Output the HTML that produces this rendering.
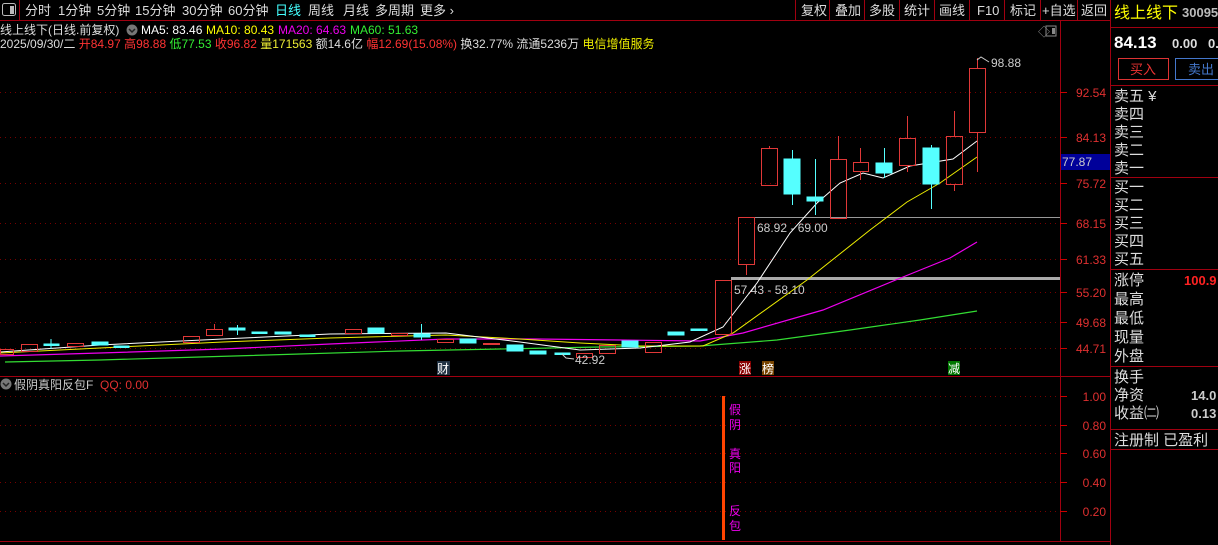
<!DOCTYPE html>
<html><head><meta charset="utf-8"><style>
html,body{margin:0;padding:0;background:#000;width:1218px;height:545px;overflow:hidden}
svg{display:block}
text{font-family:"Liberation Sans","Noto Sans CJK SC",sans-serif}
</style></head><body>
<svg width="1218" height="545" viewBox="0 0 1218 545" xmlns="http://www.w3.org/2000/svg">
<rect width="1218" height="545" fill="#000"/>
<!-- top bar -->
<line x1="0" y1="20.5" x2="1111" y2="20.5" stroke="#a00010" stroke-width="1"/>
<rect x="2.5" y="3.5" width="13" height="12" fill="none" stroke="#bbb" rx="2"/><rect x="10" y="6" width="4" height="8" fill="#bbb"/>
<line x1="19.5" y1="0" x2="19.5" y2="20" stroke="#a00010"/>
<g font-size="13" fill="#ddd">
<text x="25" y="15">分时</text><text x="58" y="15">1分钟</text><text x="97" y="15">5分钟</text><text x="135" y="15">15分钟</text><text x="182" y="15">30分钟</text><text x="228" y="15">60分钟</text><text x="275" y="15" fill="#4ff">日线</text><text x="308" y="15">周线</text><text x="343" y="15">月线</text><text x="375" y="15">多周期</text><text x="420" y="15">更多 ›</text>
<text x="801" y="15">复权</text><text x="835" y="15">叠加</text><text x="869" y="15">多股</text><text x="904" y="15">统计</text><text x="939" y="15">画线</text><text x="977" y="15">F10</text><text x="1010" y="15">标记</text><text x="1042" y="15">+自选</text><text x="1081" y="15">返回</text>
</g>
<g stroke="#a00010"><line x1="795.5" y1="0" x2="795.5" y2="20"/><line x1="829.5" y1="0" x2="829.5" y2="20"/><line x1="864.5" y1="0" x2="864.5" y2="20"/><line x1="899.5" y1="0" x2="899.5" y2="20"/><line x1="934.5" y1="0" x2="934.5" y2="20"/><line x1="969.5" y1="0" x2="969.5" y2="20"/><line x1="1004.5" y1="0" x2="1004.5" y2="20"/><line x1="1040.5" y1="0" x2="1040.5" y2="20"/><line x1="1077.5" y1="0" x2="1077.5" y2="20"/></g>
<!-- info lines -->
<g font-size="12">
<text x="0" y="34" fill="#ddd">线上线下(日线.前复权)</text>
<circle cx="132" cy="30" r="5.5" fill="#777"/><path d="M129 29 L132 32 L135 29" stroke="#222" fill="none" stroke-width="1.5"/>
<text x="141" y="34" fill="#fff">MA5: 83.46</text><text x="206" y="34" fill="#ff0">MA10: 80.43</text><text x="278" y="34" fill="#e0e">MA20: 64.63</text><text x="350" y="34" fill="#3e3">MA60: 51.63</text>
<text x="0" y="48" fill="#ddd">2025/09/30/二 <tspan fill="#f33">开84.97 高98.88 </tspan><tspan fill="#3e3">低77.53 </tspan><tspan fill="#f33">收96.82 </tspan><tspan fill="#ee3">量171563 </tspan><tspan fill="#ddd">额14.6亿 </tspan><tspan fill="#f33">幅12.69(15.08%) </tspan><tspan fill="#ddd">换32.77% 流通5236万 </tspan><tspan fill="#ee0">电信增值服务</tspan></text>
</g>
<!-- axis -->
<line x1="1060.5" y1="21" x2="1060.5" y2="541" stroke="#a00010"/>
<line x1="1110.5" y1="0" x2="1110.5" y2="545" stroke="#a00010"/>
<line x1="0" y1="376.5" x2="1111" y2="376.5" stroke="#a00010"/>
<line x1="0" y1="541.5" x2="1111" y2="541.5" stroke="#a00010"/>
<text x="1038" y="36" fill="#888" font-size="12">◇</text><rect x="1046" y="26" width="10" height="10" fill="none" stroke="#888"/><rect x="1052" y="28" width="3" height="6" fill="#888"/>
<!-- grid -->
<g stroke="#700" stroke-dasharray="1,4">
<line x1="0" y1="92.5" x2="1060" y2="92.5"/><line x1="0" y1="137.5" x2="1060" y2="137.5"/><line x1="0" y1="183.5" x2="1060" y2="183.5"/><line x1="0" y1="223.5" x2="1060" y2="223.5"/><line x1="0" y1="259.5" x2="1060" y2="259.5"/><line x1="0" y1="292.5" x2="1060" y2="292.5"/><line x1="0" y1="322.5" x2="1060" y2="322.5"/><line x1="0" y1="348.5" x2="1060" y2="348.5"/>
<line x1="0" y1="396.5" x2="1060" y2="396.5"/><line x1="0" y1="425.5" x2="1060" y2="425.5"/><line x1="0" y1="453.5" x2="1060" y2="453.5"/><line x1="0" y1="482.5" x2="1060" y2="482.5"/><line x1="0" y1="511.5" x2="1060" y2="511.5"/>
</g>
<g stroke="#c00"><line x1="1060" y1="92.5" x2="1067" y2="92.5"/><line x1="1060" y1="137.5" x2="1067" y2="137.5"/><line x1="1060" y1="183.5" x2="1067" y2="183.5"/><line x1="1060" y1="223.5" x2="1067" y2="223.5"/><line x1="1060" y1="259.5" x2="1067" y2="259.5"/><line x1="1060" y1="292.5" x2="1067" y2="292.5"/><line x1="1060" y1="322.5" x2="1067" y2="322.5"/><line x1="1060" y1="348.5" x2="1067" y2="348.5"/><line x1="1060" y1="396.5" x2="1067" y2="396.5"/><line x1="1060" y1="425.5" x2="1067" y2="425.5"/><line x1="1060" y1="453.5" x2="1067" y2="453.5"/><line x1="1060" y1="482.5" x2="1067" y2="482.5"/><line x1="1060" y1="511.5" x2="1067" y2="511.5"/></g>
<g font-size="12" fill="#e03030" text-anchor="end">
<text x="1106" y="97">92.54</text><text x="1106" y="142">84.13</text><text x="1106" y="188">75.72</text><text x="1106" y="228">68.15</text><text x="1106" y="264">61.33</text><text x="1106" y="297">55.20</text><text x="1106" y="327">49.68</text><text x="1106" y="353">44.71</text>
<text x="1106" y="401">1.00</text><text x="1106" y="430">0.80</text><text x="1106" y="458">0.60</text><text x="1106" y="487">0.40</text><text x="1106" y="516">0.20</text>
</g>
<rect x="1061" y="154" width="49" height="16" fill="#00009a"/><text x="1062" y="166" font-size="12" fill="#ccc">77.87</text>
<!-- horizontal levels -->
<line x1="755" y1="217.5" x2="1060" y2="217.5" stroke="#999"/>
<rect x="731" y="277" width="329" height="3" fill="#aaa"/>
<text x="757" y="232" font-size="12" fill="#ccc">68.92 - 69.00</text>
<text x="734" y="294" font-size="12" fill="#ccc">57.43 - 58.10</text>
<!-- MA lines -->
<polyline fill="none" stroke="#3d3" stroke-width="1.2" points="5,362 100,360 200,357 300,354 400,351 500,349 600,347 700,346 777,340 850,330 920,320 977,311"/>
<polyline fill="none" stroke="#e0e" stroke-width="1.2" points="0,356 100,353 223,349 330,344 446,339 536,339 620,340 700,341 743,333 823,310 903,277 950,258 977,242"/>
<polyline fill="none" stroke="#ee0" stroke-width="1" points="0,353 100,348 223,342 330,338 446,335 520,339 580,343 640,346 703,346 733,333 807,280 870,230 907,202 940,183 977,157"/>
<polyline fill="none" stroke="#fff" stroke-width="1" points="0,352 100,345 223,339 330,334 446,333 520,342 580,350 640,348 690,342 723,327 757,283 790,233 817,203 840,183 863,173 883,178 910,166 953,159 977,141"/>
<!-- candles -->
<g stroke="#e03838" fill="none">
<rect x="0.5" y="349.5" width="13" height="5"/><rect x="21.5" y="344.5" width="16" height="7"/><rect x="67.5" y="343.5" width="16" height="3"/><rect x="183.5" y="336.5" width="16" height="6"/><line x1="214.5" y1="324" x2="214.5" y2="329"/><rect x="206.5" y="329.5" width="16" height="6"/><rect x="345.5" y="329.5" width="16" height="4"/><rect x="391.5" y="333.5" width="16" height="2"/><rect x="437.5" y="339.5" width="16" height="3"/><rect x="576.5" y="353.5" width="16" height="4"/><rect x="599.5" y="345.5" width="16" height="8"/><rect x="645.5" y="342.5" width="16" height="10"/>
<rect x="715.5" y="280.5" width="16" height="54"/><line x1="746.5" y1="264" x2="746.5" y2="275"/><rect x="738.5" y="217.5" width="16" height="47"/>
<line x1="769.5" y1="146" x2="769.5" y2="148"/><rect x="761.5" y="148.5" width="16" height="37"/>
<line x1="838.5" y1="136" x2="838.5" y2="159"/><rect x="830.5" y="159.5" width="16" height="59"/>
<line x1="860.5" y1="148" x2="860.5" y2="162"/><line x1="860.5" y1="171" x2="860.5" y2="180"/><rect x="853.5" y="162.5" width="15" height="9"/>
<line x1="907.5" y1="116" x2="907.5" y2="138"/><line x1="907.5" y1="165" x2="907.5" y2="172"/><rect x="899.5" y="138.5" width="16" height="27"/>
<line x1="954.5" y1="111" x2="954.5" y2="136"/><line x1="954.5" y1="184" x2="954.5" y2="191"/><rect x="946.5" y="136.5" width="16" height="48"/>
<line x1="977.5" y1="58" x2="977.5" y2="68"/><line x1="977.5" y1="132" x2="977.5" y2="172"/><rect x="969.5" y="68.5" width="16" height="64"/>
</g>
<rect x="483" y="343" width="17" height="2" fill="#e03838"/>
<g fill="#5ff" stroke="#5ff">
<line x1="51" y1="339" x2="51" y2="349"/><rect x="44" y="344" width="15" height="1.5"/>
<rect x="92" y="342" width="16" height="3"/><rect x="114" y="346" width="15" height="1.5"/><rect x="229" y="328" width="16" height="2"/><line x1="237.5" y1="325" x2="237.5" y2="335"/><rect x="252" y="332" width="15" height="1.5"/><rect x="275" y="332" width="16" height="2"/><rect x="300" y="335" width="15" height="1.5"/><rect x="368" y="328" width="16" height="5"/><rect x="414" y="334" width="16" height="3"/><line x1="421.5" y1="324" x2="421.5" y2="340"/><rect x="460" y="339" width="16" height="4"/><rect x="507" y="345" width="16" height="6"/><rect x="530" y="351" width="16" height="3"/><rect x="555" y="353" width="15" height="1.5"/><rect x="622" y="341" width="16" height="6"/><rect x="668" y="332" width="16" height="3"/><rect x="691" y="329" width="16" height="1.5"/>
<line x1="792.5" y1="150" x2="792.5" y2="205"/><rect x="784" y="159" width="16" height="35"/>
<line x1="815.5" y1="159" x2="815.5" y2="215"/><rect x="807" y="197" width="16" height="4"/>
<line x1="884.5" y1="148" x2="884.5" y2="178"/><rect x="876" y="163" width="16" height="10"/>
<line x1="931.5" y1="145" x2="931.5" y2="209"/><rect x="923" y="148" width="16" height="36"/>
</g>
<text x="575" y="364" font-size="12" fill="#ccc">42.92</text><path d="M562 354 L566 358 L574 359" stroke="#ccc" fill="none"/>
<text x="991" y="67" font-size="12" fill="#ccc">98.88</text><path d="M977 60 L981 57 L989 62" stroke="#ccc" fill="none"/>
<!-- markers -->
<g font-size="12" fill="#fff">
<rect x="437" y="361" width="13" height="14" fill="#234"/><text x="437" y="373">财</text>
<rect x="739" y="361" width="12" height="14" fill="#800"/><text x="739" y="373">涨</text>
<rect x="762" y="361" width="12" height="14" fill="#740"/><text x="762" y="373">榜</text>
<rect x="948" y="361" width="12" height="14" fill="#070"/><text x="948" y="373">减</text>
</g>
<!-- indicator -->
<circle cx="6" cy="384" r="5.5" fill="#777"/><path d="M3 383 L6 386 L9 383" stroke="#222" fill="none" stroke-width="1.5"/>
<text x="14" y="389" font-size="12" fill="#ccc">假阴真阳反包F</text><text x="100" y="389" font-size="12" fill="#e03030">QQ: 0.00</text>
<rect x="722" y="396" width="3" height="144" fill="#f40"/>
<g font-size="12" fill="#e0e"><text x="729" y="414">假</text><text x="729" y="429">阴</text><text x="729" y="458">真</text><text x="729" y="472">阳</text><text x="729" y="515">反</text><text x="729" y="530">包</text></g>
<!-- right panel -->
<text x="1114" y="18" font-size="16" fill="#ff0">线上线下</text><text x="1182" y="17" font-size="13" font-weight="bold" fill="#bbb">30095</text>
<line x1="1111" y1="27.5" x2="1218" y2="27.5" stroke="#a00010"/>
<text x="1114" y="48" font-size="17" font-weight="bold" fill="#fff">84.13</text><text x="1172" y="48" font-size="13" font-weight="bold" fill="#ddd">0.00</text><text x="1208" y="48" font-size="13" font-weight="bold" fill="#ddd">0.</text>
<rect x="1118.5" y="58.5" width="50" height="21" fill="none" stroke="#d33"/><text x="1130" y="74" font-size="13" fill="#e33">买入</text>
<rect x="1175.5" y="58.5" width="50" height="21" fill="none" stroke="#47c"/><text x="1188" y="74" font-size="13" fill="#47c">卖出</text>
<g stroke="#a00010"><line x1="1111" y1="85.5" x2="1218" y2="85.5"/><line x1="1111" y1="177.5" x2="1218" y2="177.5"/><line x1="1111" y1="269.5" x2="1218" y2="269.5"/><line x1="1111" y1="366.5" x2="1218" y2="366.5"/><line x1="1111" y1="429.5" x2="1218" y2="429.5"/><line x1="1111" y1="449.5" x2="1218" y2="449.5"/></g>
<g font-size="15" fill="#ddd">
<text x="1114" y="101">卖五 ¥</text><text x="1114" y="119">卖四</text><text x="1114" y="137">卖三</text><text x="1114" y="155">卖二</text><text x="1114" y="173">卖一</text>
<text x="1114" y="192">买一</text><text x="1114" y="210">买二</text><text x="1114" y="228">买三</text><text x="1114" y="246">买四</text><text x="1114" y="264">买五</text>
<text x="1114" y="285">涨停</text><text x="1114" y="304">最高</text><text x="1114" y="323">最低</text><text x="1114" y="342">现量</text><text x="1114" y="361">外盘</text>
<text x="1114" y="382">换手</text><text x="1114" y="400">净资</text><text x="1114" y="418">收益㈡</text>
<text x="1114" y="445">注册制 已盈利 </text>
</g>
<text x="1184" y="285" font-size="13" font-weight="bold" fill="#f22">100.9</text>
<text x="1191" y="400" font-size="13" font-weight="bold" fill="#ccc">14.0</text>
<text x="1191" y="418" font-size="13" font-weight="bold" fill="#ccc">0.13</text>
</svg>
</body></html>
